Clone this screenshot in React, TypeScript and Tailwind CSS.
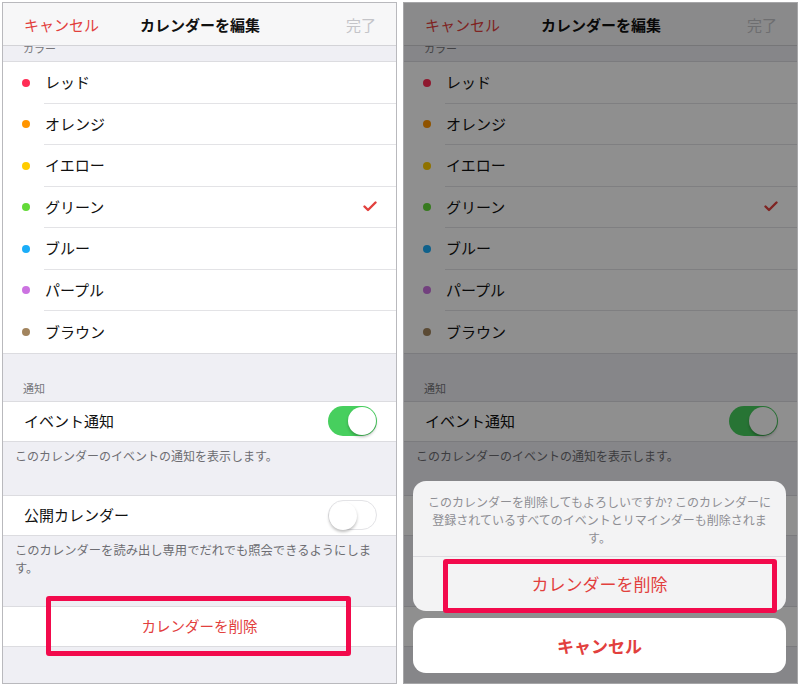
import React from "react";

const FONT = { fontFamily: '"Noto Sans CJK JP", "Noto Sans", sans-serif' };

const colors = [
  { name: "レッド", color: "#ff2d55" },
  { name: "オレンジ", color: "#ff9500" },
  { name: "イエロー", color: "#ffcc00" },
  { name: "グリーン", color: "#63da38", checked: true },
  { name: "ブルー", color: "#1badf8" },
  { name: "パープル", color: "#cc73e1" },
  { name: "ブラウン", color: "#a2845e" },
];

function Toggle({ on }: { on: boolean }) {
  return (
    <div
      className={
        "relative w-[49px] h-[30px] rounded-full " +
        (on ? "bg-[#47cf5e]" : "bg-white border border-[#e3e3e6]")
      }
    >
      <div
        className={
          "absolute top-[1px] w-[28px] h-[28px] rounded-full bg-white shadow-[0_2px_3px_rgba(0,0,0,0.25)] " +
          (on ? "right-[1px]" : "left-[0px] top-[0px]")
        }
      />
    </div>
  );
}

function Check() {
  return (
    <svg width="14" height="11" viewBox="0 0 14 11">
      <polyline
        points="1.5,5.5 5,9 12.5,1.5"
        fill="none"
        stroke="#e2403d"
        strokeWidth="2.4"
        strokeLinecap="round"
        strokeLinejoin="round"
      />
    </svg>
  );
}

function Screen() {
  return (
    <div className="flex flex-col h-full bg-[#efeff4]">
      <div className="h-[43px] shrink-0 bg-[#f7f7f8] border-b border-[#d3d3d7] grid grid-cols-[1fr_auto_1fr] items-center pl-[21px] pr-[20px] relative z-10">
        <span className="text-[15px] text-[#e2403d] leading-none">キャンセル</span>
        <span className="text-[15px] font-bold text-[#111] leading-none">カレンダーを編集</span>
        <span className="text-[15px] text-[#c4c4c8] leading-none text-right">完了</span>
      </div>
      <div className="h-[15px] shrink-0 overflow-hidden px-[20px]">
        <div className="text-[11px] leading-[12px] -mt-[4px] text-[#77777c]">カラー</div>
      </div>
      <div className="bg-white border-y border-[#dcdce0]">
        {colors.map((c, i) => (
          <div key={c.name} className="h-[41.5px] flex">
            <div className="w-[41px] shrink-0 flex items-center pl-[19px]">
              <div className="w-[8px] h-[8px] rounded-full" style={{ backgroundColor: c.color }} />
            </div>
            <div
              className={
                "flex-1 flex items-center justify-between pl-[1px] pr-[19px] " +
                (i < colors.length - 1 ? "border-b border-[#e3e3e6]" : "")
              }
            >
              <span className="text-[15px] text-[#111]">{c.name}</span>
              {c.checked && <Check />}
            </div>
          </div>
        ))}
      </div>
      <div className="h-[47px] shrink-0 flex items-end pb-[6px] px-[20px]">
        <span className="text-[11px] leading-[14px] text-[#77777c]">通知</span>
      </div>
      <div className="h-[41px] shrink-0 bg-white border-y border-[#dcdce0] flex items-center justify-between pl-[21px] pr-[19px]">
        <span className="text-[15px] text-[#111]">イベント通知</span>
        <Toggle on />
      </div>
      <div className="h-[53px] shrink-0 pt-[5px] px-[12px] text-[12px] leading-[18px] text-[#6d6d72]">
        このカレンダーのイベントの通知を表示します。
      </div>
      <div className="h-[41px] shrink-0 bg-white border-y border-[#dcdce0] flex items-center justify-between pl-[21px] pr-[19px]">
        <span className="text-[15px] text-[#111]">公開カレンダー</span>
        <Toggle on={false} />
      </div>
      <div className="h-[70px] shrink-0 pt-[5px] px-[12px] text-[12.3px] leading-[18px] text-[#6d6d72]">
        このカレンダーを読み出し専用でだれでも照会できるようにしま
        <br />
        す。
      </div>
      <div className="h-[41px] shrink-0 bg-white border-y border-[#dcdce0] flex items-center justify-center">
        <span className="text-[14.5px] text-[#e2403d]">カレンダーを削除</span>
      </div>
    </div>
  );
}

function Highlight({ className }: { className: string }) {
  return (
    <div
      className={
        "absolute border-[5px] border-[#f20a4c] rounded-[3px] z-30 " + className
      }
    />
  );
}

export default function App() {
  return (
    <div className="w-[800px] h-[686px] bg-white flex gap-[6px] pl-[2px] pt-[2px]" style={FONT}>
      <div className="relative w-[395px] h-[682px] border border-[#b9b9bd] overflow-hidden">
        <Screen />
        <Highlight className="left-[43px] top-[593px] w-[305px] h-[60px]" />
      </div>
      <div className="relative w-[395px] h-[682px] border border-[#a6a6a8] overflow-hidden">
        <Screen />
        <div className="absolute inset-0 bg-black/[0.44] z-20" />
        <div className="absolute left-[9px] right-[11px] bottom-[10px] z-20 flex flex-col gap-[7px]">
          <div className="rounded-[13px] bg-[#f3f3f4] overflow-hidden">
            <div className="h-[76px] pt-[12px] text-center text-[12px] leading-[18px] text-[#8e8e93] border-b border-[#dcdce0]">
              このカレンダーを削除してもよろしいですか? このカレンダーに
              <br />
              登録されているすべてのイベントとリマインダーも削除されま
              <br />
              す。
            </div>
            <div className="h-[54px] flex items-center justify-center">
              <span className="text-[17px] text-[#e2403d]">カレンダーを削除</span>
            </div>
          </div>
          <div className="h-[55px] rounded-[13px] bg-white flex items-center justify-center">
            <span className="text-[17px] font-bold text-[#e2403d]">キャンセル</span>
          </div>
        </div>
        <Highlight className="left-[39px] top-[556px] w-[334px] h-[54px]" />
      </div>
    </div>
  );
}
